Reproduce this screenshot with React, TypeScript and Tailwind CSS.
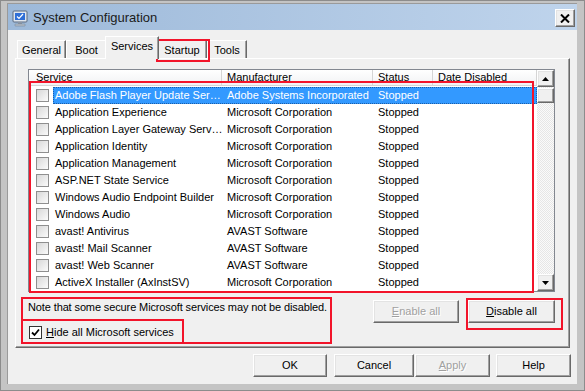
import React from 'react';

const rows = [
  { name: 'Adobe Flash Player Update Ser…', maker: 'Adobe Systems Incorporated', status: 'Stopped', selected: true },
  { name: 'Application Experience', maker: 'Microsoft Corporation', status: 'Stopped' },
  { name: 'Application Layer Gateway Serv…', maker: 'Microsoft Corporation', status: 'Stopped' },
  { name: 'Application Identity', maker: 'Microsoft Corporation', status: 'Stopped' },
  { name: 'Application Management', maker: 'Microsoft Corporation', status: 'Stopped' },
  { name: 'ASP.NET State Service', maker: 'Microsoft Corporation', status: 'Stopped' },
  { name: 'Windows Audio Endpoint Builder', maker: 'Microsoft Corporation', status: 'Stopped' },
  { name: 'Windows Audio', maker: 'Microsoft Corporation', status: 'Stopped' },
  { name: 'avast! Antivirus', maker: 'AVAST Software', status: 'Stopped' },
  { name: 'avast! Mail Scanner', maker: 'AVAST Software', status: 'Stopped' },
  { name: 'avast! Web Scanner', maker: 'AVAST Software', status: 'Stopped' },
  { name: 'ActiveX Installer (AxInstSV)', maker: 'Microsoft Corporation', status: 'Stopped' },
];

// classic raised 3D button
const raised =
  'border border-t-white border-l-white border-r-[#696969] border-b-[#696969] shadow-[inset_-1px_-1px_0_#a0a0a0,inset_1px_1px_0_#e3e3e3] bg-[#f0f0f0]';

function Btn({ children, className, disabled }: { children: React.ReactNode; className: string; disabled?: boolean }) {
  return (
    <div
      className={`${raised} ${className} h-[23px] flex items-center justify-center text-[11px] ${
        disabled ? 'text-[#a0a0a0] [text-shadow:1px_1px_0_#fff]' : 'text-black'
      }`}
    >
      {children}
    </div>
  );
}

function Check({ checked }: { checked?: boolean }) {
  return (
    <div
      className={`w-[13px] h-[13px] shrink-0 border flex items-center justify-center ${
        checked ? 'border-[#333] bg-white' : 'border-[#8f8f8f] bg-gradient-to-br from-[#d8d8d8] to-[#fbfbfb]'
      }`}
    >
      {checked && (
        <svg width="9" height="9" viewBox="0 0 9 9">
          <path d="M1 4.5 L3.5 7 L8 1.5" fill="none" stroke="#000" strokeWidth="1.8" />
        </svg>
      )}
    </div>
  );
}

function Tab({ label, className, active }: { label: string; className: string; active?: boolean }) {
  return (
    <div
      className={`${className} border-t border-l border-t-white border-l-white border-r border-r-[#696969] shadow-[inset_-1px_0_0_#a0a0a0] flex items-center justify-center text-[11px] bg-[#f0f0f0] ${
        active ? 'h-[23px] -mx-[2px] relative z-10 pb-[3px]' : 'h-[19px] mt-[4px]'
      }`}
    >
      {label}
    </div>
  );
}

export default function App() {
  return (
    <div className="relative w-[585px] h-[391px] overflow-hidden bg-[#c4c4c4] border border-[#8c8c8c] flex flex-col pl-[6px] pr-[7px] pt-[2px] pb-[6px] font-['Liberation_Sans',Arial,sans-serif] text-black">
      <div className="flex-1 flex flex-col bg-[#f0f0f0] border-l border-t border-[#9a9a9a]">
        {/* Title bar */}
        <div className="h-[26px] shrink-0 flex items-center bg-gradient-to-r from-[#9db9d9] to-[#bfd4ec] pl-[4px] pr-[2px] pt-[2px]">
          <svg width="17" height="17" viewBox="0 0 17 17">
            <rect x="1" y="1" width="14" height="11" rx="1" fill="#dfe6ee" stroke="#5a6a80" />
            <rect x="3" y="3" width="10" height="7" fill="#2f6fd6" />
            <path d="M5 6.5 L7 8.5 L11 4" fill="none" stroke="#fff" strokeWidth="1.2" />
            <rect x="6" y="12" width="4" height="2" fill="#8a96a6" />
            <rect x="3" y="14" width="10" height="2" rx="0.5" fill="#b6c0cc" stroke="#6b7888" strokeWidth="0.5" />
          </svg>
          <span className="ml-[4px] text-[13px] text-[#1b1b1b]">System Configuration</span>
          <div className={`${raised} ml-auto w-[20px] h-[18px] flex items-center justify-center`}>
            <svg width="10" height="9" viewBox="0 0 10 9">
              <path d="M1 0.5 L9 8.5 M9 0.5 L1 8.5" stroke="#000" strokeWidth="2" />
            </svg>
          </div>
        </div>

        {/* Tabs */}
        <div className="mt-[6px] ml-[9px] flex items-end">
          <Tab label="General" className="w-[49px]" />
          <Tab label="Boot" className="w-[41px]" />
          <Tab label="Services" active className="w-[54px]" />
          <Tab label="Startup" className="w-[50px]" />
          <Tab label="Tools" className="w-[40px]" />
        </div>

        {/* Panel */}
        <div className="mx-[7px] -mt-[1px] h-[290px] shrink-0 border-t border-l border-white border-r border-b border-r-[#696969] border-b-[#696969] shadow-[inset_-1px_-1px_0_#a0a0a0] pl-[12px] pt-[10px] flex flex-col">
          {/* List */}
          <div className="w-[527px] h-[223px] border border-[#828790] bg-white flex overflow-hidden">
            <div className="w-[508px] flex flex-col">
              <div className="h-[16px] shrink-0 flex text-[11px] bg-gradient-to-b from-white to-[#f1f2f4] border-b border-[#d5d5d5]">
                <div className="w-[193px] pl-[7px] border-r border-[#d5d5d5] flex items-center">Service</div>
                <div className="w-[151px] pl-[5px] border-r border-[#d5d5d5] flex items-center">Manufacturer</div>
                <div className="w-[60px] pl-[5px] border-r border-[#d5d5d5] flex items-center">Status</div>
                <div className="w-[104px] pl-[5px] border-r border-[#d5d5d5] flex items-center">Date Disabled</div>
              </div>
              <div className="pt-[1px] flex flex-col">
                {rows.map((r) => (
                  <div key={r.name} className="h-[17px] shrink-0 flex items-center text-[11px]">
                    <div className="w-[24px] pl-[7px] shrink-0">
                      <Check />
                    </div>
                    <div
                      className={`flex-1 h-full flex items-center ${
                        r.selected ? 'bg-[#3399ff] text-white outline outline-1 outline-dotted outline-[#1b5ea8] -outline-offset-1' : ''
                      }`}
                    >
                      <div className="w-[169px] pl-[2px] whitespace-nowrap overflow-hidden">{r.name}</div>
                      <div className="w-[151px] pl-[5px] whitespace-nowrap overflow-hidden">{r.maker}</div>
                      <div className="w-[60px] pl-[5px]">{r.status}</div>
                    </div>
                  </div>
                ))}
              </div>
            </div>
            {/* Scrollbar */}
            <div className="w-[17px] flex flex-col bg-[repeating-conic-gradient(#e6e6e6_0_25%,#fafafa_0_50%)] bg-[length:2px_2px]">
              <div className={`${raised} h-[17px] flex items-center justify-center`}>
                <svg width="7" height="4" viewBox="0 0 7 4"><path d="M0 4 L3.5 0 L7 4Z" fill="#000" /></svg>
              </div>
              <div className={`${raised} h-[15px] mt-[1px]`} />
              <div className="flex-1" />
              <div className={`${raised} h-[17px] flex items-center justify-center`}>
                <svg width="7" height="4" viewBox="0 0 7 4"><path d="M0 0 L3.5 4 L7 0Z" fill="#000" /></svg>
              </div>
            </div>
          </div>

          {/* Below list */}
          <div className="flex mt-[8px]">
            <div className="flex flex-col text-[11px]">
              <div className="h-[14px] flex items-center tracking-[-0.12px]">
                Note that some secure Microsoft services may not be disabled.
              </div>
              <div className="mt-[10px] flex items-center gap-[4px] ml-[1px]">
                <Check checked />
                <span>
                  <span className="underline">H</span>ide all Microsoft services
                </span>
              </div>
            </div>
            <div className="ml-auto mr-[14px] flex gap-[9px]">
              <Btn className="w-[86px]" disabled>
                <span className="underline">E</span>nable all
              </Btn>
              <Btn className="w-[87px]">
                <span className="underline">D</span>isable all
              </Btn>
            </div>
          </div>
        </div>

        {/* Bottom buttons */}
        <div className="mt-[6px] flex justify-end pr-[6px]">
          <Btn className="w-[74px]">OK</Btn>
          <Btn className="w-[80px] ml-[7px]">Cancel</Btn>
          <Btn className="w-[75px] ml-[1px]" disabled>
            <span className="underline">A</span>pply
          </Btn>
          <Btn className="w-[75px] ml-[6px]">Help</Btn>
        </div>
      </div>

      {/* Red annotation boxes */}
      <div className="absolute left-[155px] top-[38px] w-[54px] h-[23px] border-2 border-[#f2142a]" />
      <div className="absolute left-[28px] top-[80px] w-[505px] h-[212px] border-2 border-[#f2142a]" />
      <div className="absolute left-[20px] top-[296px] w-[311px] h-[47px] border-2 border-[#f2142a]" />
      <div className="absolute left-[20px] top-[318px] w-[163px] h-[25px] border-2 border-[#f2142a]" />
      <div className="absolute left-[465px] top-[297px] w-[97px] h-[32px] border-2 border-[#f2142a]" />
    </div>
  );
}
